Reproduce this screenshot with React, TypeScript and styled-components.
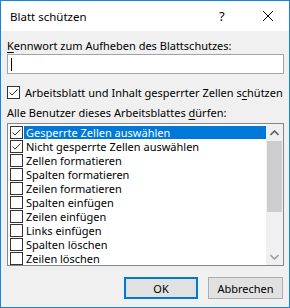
import styled, { createGlobalStyle } from "styled-components";

const GlobalStyle = createGlobalStyle`
  html, body {
    margin: 0;
    padding: 0;
    background: #ffffff;
  }
  body {
    font-family: "Noto Sans", "Open Sans", sans-serif;
    font-size: 11px;
    color: #000000;
  }
`;

const items = [
  { label: "Gesperrte Zellen auswählen", checked: true, selected: true },
  { label: "Nicht gesperrte Zellen auswählen", checked: true },
  { label: "Zellen formatieren" },
  { label: "Spalten formatieren" },
  { label: "Zeilen formatieren" },
  { label: "Spalten einfügen" },
  { label: "Zeilen einfügen" },
  { label: "Links einfügen" },
  { label: "Spalten löschen" },
  { label: "Zeilen löschen" },
];

function Check({ checked }: { checked?: boolean }) {
  return (
    <Box>
      {checked && (
        <svg width="11" height="11" viewBox="0 0 11 11">
          <path d="M1.5 5.5 L4 8 L9.5 2.5" fill="none" stroke="#333" strokeWidth="1" />
        </svg>
      )}
    </Box>
  );
}

function Key({ children }: { children: string }) {
  return <U>{children}</U>;
}

export default function App() {
  return (
    <>
      <GlobalStyle />
      <Window>
        <TitleBar>
          <Title>Blatt schützen</Title>
          <Help>?</Help>
          <Close>
            <svg width="10" height="10" viewBox="0 0 10 10">
              <path d="M0 0 L10 10 M10 0 L0 10" stroke="#000" strokeWidth="1" />
            </svg>
          </Close>
        </TitleBar>
        <Body>
          <Label>
            <Key>K</Key>ennwort zum Aufheben des Blattschutzes:
          </Label>
          <Input>
            <Caret />
          </Input>
          <CheckRow>
            <Check checked />
            <span>
              Arbeitsblatt und Inhalt gesperrter Zellen s<Key>c</Key>hützen
            </span>
          </CheckRow>
          <Label $top={5}>
            Alle Benutzer dieses Arbeitsblattes <Key>d</Key>ürfen:
          </Label>
          <ListBox>
            <Rows>
              {items.map((it) => (
                <Row key={it.label}>
                  <Check checked={it.checked} />
                  <ItemText $selected={it.selected}>{it.label}</ItemText>
                </Row>
              ))}
            </Rows>
            <ScrollBar>
              <Arrow>
                <svg width="9" height="6" viewBox="0 0 9 6">
                  <path d="M0.5 5 L4.5 1 L8.5 5" fill="none" stroke="#606060" strokeWidth="1.6" />
                </svg>
              </Arrow>
              <Track>
                <Thumb />
              </Track>
              <Arrow>
                <svg width="9" height="6" viewBox="0 0 9 6">
                  <path d="M0.5 1 L4.5 5 L8.5 1" fill="none" stroke="#a0a0a0" strokeWidth="1.6" />
                </svg>
              </Arrow>
            </ScrollBar>
          </ListBox>
          <Buttons>
            <Button $default>OK</Button>
            <Button>Abbrechen</Button>
          </Buttons>
        </Body>
      </Window>
    </>
  );
}

const Window = styled.div`
  width: 290px;
  height: 308px;
  box-sizing: border-box;
  border: 1px solid #1883d7;
  display: flex;
  flex-direction: column;
  background: #f0f0f0;
`;

const TitleBar = styled.div`
  height: 30px;
  background: #ffffff;
  display: flex;
  align-items: center;
  padding: 0 16px 0 9px;
`;

const Title = styled.div`
  flex: 1;
  font-size: 11.5px;
  padding-top: 1px;
`;

const Help = styled.div`
  font-size: 13px;
  width: 6px;
  margin-right: 38px;
`;

const Close = styled.div`
  display: flex;
  width: 10px;
  height: 10px;
`;

const Body = styled.div`
  flex: 1;
  display: flex;
  flex-direction: column;
  padding: 7px 5px 0 6px;
`;

const Label = styled.div<{ $top?: number }>`
  height: 16px;
  line-height: 16px;
  white-space: nowrap;
  margin-top: ${(p) => p.$top ?? 0}px;
`;

const U = styled.span`
  text-decoration: underline;
  text-underline-offset: 2px;
`;

const Input = styled.div`
  height: 20px;
  box-sizing: border-box;
  border: 1px solid #a3a3a3;
  background: #ffffff;
  display: flex;
  align-items: center;
  padding-left: 3px;
`;

const Caret = styled.div`
  width: 1px;
  height: 13px;
  background: #000;
`;

const CheckRow = styled.div`
  display: flex;
  align-items: center;
  gap: 5px;
  height: 16px;
  margin-top: 10px;
  white-space: nowrap;
`;

const Box = styled.div`
  width: 13px;
  height: 13px;
  box-sizing: border-box;
  border: 1px solid #333333;
  background: #ffffff;
  display: flex;
  align-items: center;
  justify-content: center;
  flex-shrink: 0;
`;

const ListBox = styled.div`
  margin-top: 2px;
  height: 143px;
  box-sizing: border-box;
  border: 1px solid #828790;
  background: #ffffff;
  display: flex;
`;

const Rows = styled.div`
  flex: 1;
  padding: 1px 0 0 2px;
  display: flex;
  flex-direction: column;
`;

const Row = styled.div`
  height: 14.3px;
  display: flex;
  align-items: center;
  gap: 1px;
  white-space: nowrap;
`;

const ItemText = styled.div<{ $selected?: boolean }>`
  flex: 1;
  height: 13px;
  line-height: 13px;
  padding-left: 2px;
  background: ${(p) => (p.$selected ? "#0078d7" : "transparent")};
  color: ${(p) => (p.$selected ? "#ffffff" : "#000000")};
`;

const ScrollBar = styled.div`
  width: 17px;
  background: #f0f0f0;
  display: flex;
  flex-direction: column;
`;

const Arrow = styled.div`
  height: 17px;
  display: flex;
  align-items: center;
  justify-content: center;
`;

const Track = styled.div`
  flex: 1;
  padding: 0 1px;
`;

const Thumb = styled.div`
  height: 71px;
  background: #cdcdcd;
`;

const Buttons = styled.div`
  margin-top: 11px;
  display: flex;
  justify-content: flex-end;
  gap: 10px;
  padding-right: 1px;
`;

const Button = styled.button<{ $default?: boolean }>`
  width: ${(p) => (p.$default ? 74 : 75)}px;
  height: 22px;
  box-sizing: border-box;
  font-family: "Noto Sans", "Open Sans", sans-serif;
  font-size: 11px;
  color: #000;
  background: #e1e1e1;
  border: ${(p) => (p.$default ? "2px solid #0078d7" : "1px solid #adadad")};
  padding: 0;
  border-radius: 0;
`;
